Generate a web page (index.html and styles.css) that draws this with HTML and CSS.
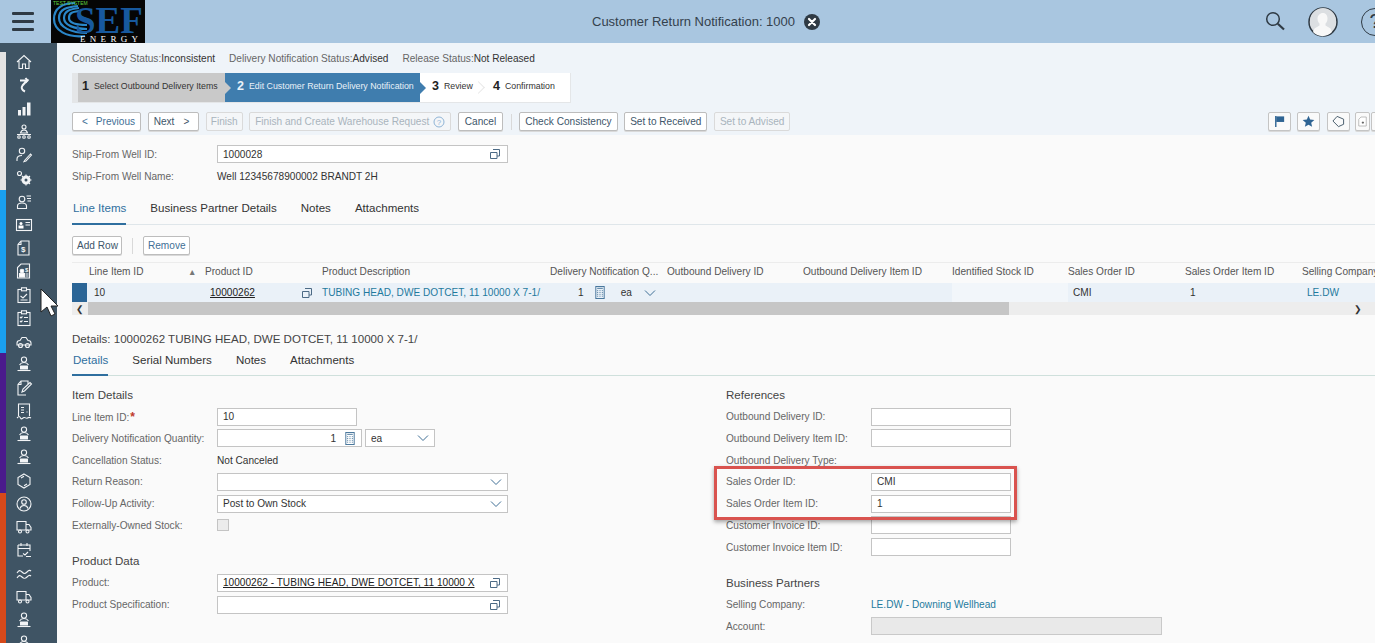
FILE: index.html
```html
<!DOCTYPE html>
<html lang="en">
<head>
<meta charset="utf-8">
<title>Customer Return Notification: 1000</title>
<link rel="stylesheet" href="styles.css">
</head>
<body>
<svg class="defs" width="0" height="0" aria-hidden="true">
  <defs>
    <symbol id="person" viewBox="0 0 16 16"><circle cx="8" cy="3.600" r="2.600"/><path d="M3.500 9c1-1.800 2.600-2.500 4.500-2.500s3.500.7 4.500 2.500"/><rect x="4" y="9.500" width="8" height="4" rx=".6" fill="#f2f4f6" stroke="none"/><path d="M1.500 14.500h13"/></symbol>
    <symbol id="truck" viewBox="0 0 16 16"><path d="M1 2.500h9v8.500H1zM10 5.500h3l2 3v2.500h-5"/><circle cx="4" cy="12.500" r="1.500"/><circle cx="11.500" cy="12.500" r="1.500"/></symbol>
    <symbol id="copy" viewBox="0 0 12 12"><path d="M4 1.500h6.500v6.500H8M1.500 4.500H8v6H1.500z"/></symbol>
    <symbol id="chev" viewBox="0 0 12 8"><path d="M1 1.500l5 5 5-5"/></symbol>
    <symbol id="calc" viewBox="0 0 10 14"><rect x=".5" y=".5" width="9" height="13" fill="none"/><path d="M2 2.500h6M2 5h1M4.500 5h1M7 5h1M2 7h1M4.500 7h1M7 7h1M2 9h1M4.500 9h1M7 9h1M2 11h1M4.500 11h1M7 11h1"/></symbol>
  </defs>
</svg>

<header class="shell">
  <button class="menu" aria-label="Menu"><span></span><span></span><span></span></button>
  <svg class="logo" viewBox="0 0 94 43" role="img" aria-label="SEF Energy">
    <rect width="94" height="43" fill="#050505"/>
    <g class="swirl">
      <path d="M34 36C15 38 3 30 3 19S12 3 24 3"/>
      <path d="M36 33C20 33 8 27 8 18S16 7 27 6"/>
      <path d="M36 29C23 29 13 25 13 18s6-9 15-10"/>
      <path d="M36 25C26 25 18 23 18 18s3-6 10-7"/>
    </g>
    <text x="24" y="33" class="logo-sef">SEF</text>
    <text x="29" y="41.500" class="logo-energy">ENERGY</text>
    <text x="2" y="5" class="logo-test">TEST SYSTEM</text>
  </svg>
  <div class="shell-title">
    <span>Customer Return Notification: 1000</span>
    <svg class="close" viewBox="0 0 16 16"><circle cx="8" cy="8" r="8" fill="#2f3a44"/><path d="M5 5l6 6M11 5l-6 6" stroke="#fff" stroke-width="2.200" stroke-linecap="round"/></svg>
  </div>
  <div class="shell-actions">
    <svg class="search" viewBox="0 0 20 20"><circle cx="8" cy="8" r="6.300" fill="none" stroke="#2f3a44" stroke-width="1.500"/><path d="M12.800 12.800L19 18.500" stroke="#2f3a44" stroke-width="2.200"/></svg>
    <svg class="avatar" viewBox="0 0 30 30"><circle cx="15" cy="15" r="14" fill="#dcdfe2" stroke="#2f3a44" stroke-width="1.500"/><circle cx="15" cy="14" r="13" fill="#dcdfe2"/><path d="M15 6c3 0 4.500 2.500 4.500 5.500 0 2.500-1 4-2 5v2l5 3 1.500 3.500a13 13 0 0 1-19 0L6.500 21.500l5-3v-2c-1-1-2-2.500-2-5C9.500 8.500 12 6 15 6z" fill="#f8f8f8"/></svg>
    <div class="help">?</div>
  </div>
</header>

<div class="layout">
  <nav class="rail">
    <div class="stripe">
      <i class="s-gray"></i><i class="s-blue"></i><i class="s-purple"></i><i class="s-orange"></i>
    </div>
    <div class="icons">
      <svg viewBox="0 0 16 16"><path d="M1 8l7-6.500L15 8M3 7v7.500h3.500V10h3v4.500H13V7"/></svg>
      <svg viewBox="0 0 16 16" class="bold"><path d="M4 3.500h7L6.500 8.500c-1.500 2-1 4.500 2.500 6"/><path d="M9.500 1l2 2.500-2 2"/></svg>
      <svg viewBox="0 0 16 16" class="fill"><path d="M2 9h3v5.500H2zM6.500 6h3v8.500h-3zM11 1.500h3.500v13H11z"/></svg>
      <svg viewBox="0 0 16 16"><circle cx="8" cy="3" r="2"/><path d="M4.500 9c.5-2 2-3 3.500-3s3 1 3.500 3zM1 10.500h14"/><circle cx="3" cy="13" r="1.300"/><circle cx="8" cy="13" r="1.300"/><circle cx="13" cy="13" r="1.300"/></svg>
      <svg viewBox="0 0 16 16"><circle cx="6" cy="4" r="2.700"/><path d="M1 14v-2c0-2 2-3.500 5-3.500M9 13l5.500-6 1 1L10 14l-2 .500z"/></svg>
      <svg viewBox="0 0 16 16"><circle cx="3.500" cy="3.500" r="2"/><circle cx="10" cy="10" r="3" stroke-width="3"/><path d="M10 4.500v1.500M10 14v1.500M4.500 10H6M14 10h1.500M6 6l1 1M13 13l1 1M14 6l-1 1"/></svg>
      <svg viewBox="0 0 16 16"><circle cx="6" cy="5" r="2.800"/><path d="M1.500 14.500v-2.500c0-2 2-3 4.500-3s4.500 1 4.500 3v2.500zM10.500 2H15M11 4.500h4M11.500 7H15"/></svg>
      <svg viewBox="0 0 16 16"><rect x=".5" y="2.500" width="15" height="11"/><circle cx="5" cy="6.500" r="1.500" fill="#fff" stroke="none"/><rect x="2.500" y="8.500" width="5" height="3" fill="#fff" stroke="none"/><path d="M9.500 5.500H14M9.500 8H14"/></svg>
      <svg viewBox="0 0 16 16"><path d="M5 1h8v14H2V4.500zM5 1v3.500H2"/><text x="5" y="12" class="rail-glyph">$</text></svg>
      <svg viewBox="0 0 16 16"><path d="M5 1h8.500v14H1.500V4.500z"/><circle cx="6" cy="8" r="1.800" fill="#fff"/><rect x="3.500" y="10.500" width="5" height="3.500" fill="#fff"/><text x="9" y="9" class="rail-glyph small">$</text><path d="M9.500 11h3M9.500 13h3"/></svg>
      <svg viewBox="0 0 16 16"><rect x="2" y="2.500" width="12" height="13"/><rect x="5.500" y=".8" width="5" height="3" fill="#3f5464"/><path d="M4.500 9l2.500 2 4-4M4.500 13h7"/></svg>
      <svg viewBox="0 0 16 16"><rect x="2" y="2.500" width="12" height="13"/><rect x="5.500" y=".8" width="5" height="3" fill="#3f5464"/><path d="M4 7l1 1 1.500-1.500M8 7.500h4M4 11l1 1 1.500-1.500M8 11.500h4"/></svg>
      <svg viewBox="0 0 16 16"><path d="M1 10c0-2 2-2.500 3-2.500L6 4.500h4l2 3c1 0 3 .5 3 2.500v2H1z"/><circle cx="4.500" cy="12.500" r="2"/><circle cx="11.500" cy="12.500" r="2"/></svg>
      <svg><use href="#person"/></svg>
      <svg viewBox="0 0 16 16"><path d="M10 15H2V4.500L5 1h7v3M5 1v3.500H2M6 12l1-3 7-6.500 1.500 1.500-7 7z"/></svg>
      <svg viewBox="0 0 16 16"><path d="M2.500 13V1h11v12M5 4.500h3M5 7h3M5 9.500h3M10.500 9h1M1 15c2-2 2.500-2 3.500 0s2 0 3.500-.5 2 1.500 3.500.5 2-1 3.500 0"/></svg>
      <svg><use href="#person"/></svg>
      <svg><use href="#person"/></svg>
      <svg viewBox="0 0 16 16"><path d="M8 1l6 3.500v7L8 15l-6-3.500v-7zM5 5l3-1.800M11 11l-3 1.800"/></svg>
      <svg viewBox="0 0 16 16"><circle cx="8" cy="8" r="7"/><circle cx="8" cy="6" r="2.300"/><path d="M4 12.500c.5-2 2-3 4-3s3.500 1 4 3"/></svg>
      <svg><use href="#truck"/></svg>
      <svg viewBox="0 0 16 16"><path d="M2 3h12v6M2 3v11h5M2 6.500h12M5 1v3M11 1v3M7 11.500l2 1.500 3-3M10 14.500h5"/></svg>
      <svg viewBox="0 0 16 16"><path d="M1 7c2-3 3-3 5-1s3 2 5 0 3-2 4-1M1 12c2-3 3-3 5-1s3 2 5 0 3-2 4-1"/></svg>
      <svg><use href="#truck"/></svg>
      <svg><use href="#person"/></svg>
      <svg><use href="#person"/></svg>
    </div>
  </nav>

  <main class="content">
    <section class="top-panel">
      <div class="status">
        <span>Consistency Status:<b>Inconsistent</b></span>
        <span>Delivery Notification Status:<b>Advised</b></span>
        <span>Release Status:<b>Not Released</b></span>
      </div>
      <ol class="wizard">
        <li class="step done"><em>1</em>Select Outbound Delivery Items</li>
        <li class="step current"><em>2</em>Edit Customer Return Delivery Notification</li>
        <li class="step todo review"><em>3</em>Review</li>
        <li class="step todo confirm"><em>4</em>Confirmation</li>
      </ol>
      <div class="toolbar">
        <button class="btn"><span class="lt">&lt;</span>Previous</button>
        <button class="btn btn-plain">Next<span class="gt">&gt;</span></button>
        <button class="btn off tight">Finish</button>
        <button class="btn off">Finish and Create Warehouse Request
          <svg class="qmark" viewBox="0 0 12 12"><circle cx="6" cy="6" r="5" fill="none" stroke="#8fb4d6"/><text x="6" y="9" class="qmark-t">?</text></svg></button>
        <button class="btn btn-plain wide">Cancel</button>
        <i class="sep"></i>
        <button class="btn btn-plain">Check Consistency</button>
        <button class="btn btn-plain">Set to Received</button>
        <button class="btn off">Set to Advised</button>
        <div class="tool-right">
          <button class="sq"><svg viewBox="0 0 14 14"><path d="M3 1v12" stroke="#2f6493" stroke-width="1.500"/><path d="M3.500 1.500H12v6H3.500z" fill="#2f6493"/></svg></button>
          <button class="sq"><svg viewBox="0 0 14 14"><path d="M7 .8l1.800 4.100 4.500.4-3.400 3 1 4.400L7 10.400l-3.900 2.300 1-4.400-3.400-3 4.500-.4z" fill="#2f6493"/></svg></button>
          <button class="sq tag"><svg viewBox="0 0 14 14"><path d="M5.500 1.500L1 6.500l6 6 5.500-2.500V4.500z" fill="none" stroke="#3f5464"/></svg></button>
          <button class="sq thin"><svg viewBox="0 0 12 14"><path d="M4 1h7v12H1V4z" fill="#fff" stroke="#aaa"/><path d="M5 8.500h3M6.500 7v3" stroke="#444"/></svg></button>
          <button class="sq thin"></button>
        </div>
      </div>
    </section>

    <section class="well">
      <div class="row"><label>Ship-From Well ID:</label><div class="field w291">1000028<svg class="ico copy"><use href="#copy"/></svg></div></div>
      <div class="row"><label>Ship-From Well Name:</label><span class="val">Well 12345678900002 BRANDT 2H</span></div>
    </section>

    <div class="tabs main-tabs">
      <span class="tab on">Line Items</span><span class="tab">Business Partner Details</span><span class="tab">Notes</span><span class="tab">Attachments</span>
    </div>

    <div class="row-actions">
      <button class="btn btn-plain act">Add Row</button><i class="sep"></i><button class="btn act">Remove</button>
    </div>

    <div class="table">
      <div class="thead">
        <span class="c1">Line Item ID</span><span class="c-sort">&#9650;</span><span class="c2">Product ID</span><span class="c3">Product Description</span><span class="c4">Delivery Notification Q...</span><span class="c5">Outbound Delivery ID</span><span class="c6">Outbound Delivery Item ID</span><span class="c7">Identified Stock ID</span><span class="c8">Sales Order ID</span><span class="c9">Sales Order Item ID</span><span class="c10">Selling Company</span>
      </div>
      <div class="trow">
        <i class="sel"></i>
        <span class="c1 pad">10</span><span class="c-sort"></span>
        <span class="c2 pid"><u>10000262</u><svg class="ico"><use href="#copy"/></svg></span>
        <span class="c3 link">TUBING HEAD, DWE DOTCET, 11 10000 X 7-1/</span>
        <span class="c4 qty">1<svg class="calc"><use href="#calc"/></svg><span class="ea">ea</span><svg class="chevron"><use href="#chev"/></svg></span>
        <span class="c5"></span><span class="c6"></span><span class="c7 stock"></span>
        <span class="c8 pad-s">CMI</span><span class="c9 pad-s">1</span><span class="c10 link pad-s">LE.DW</span>
      </div>
      <div class="scroll"><span class="arr">&#10094;</span><div class="thumb"></div><span class="arr right">&#10095;</span></div>
    </div>

    <h2 class="detail-title">Details: 10000262 TUBING HEAD, DWE DOTCET, 11 10000 X 7-1/</h2>
    <div class="tabs sub-tabs">
      <span class="tab on">Details</span><span class="tab">Serial Numbers</span><span class="tab">Notes</span><span class="tab">Attachments</span>
    </div>

    <div class="form">
      <div class="col">
        <h3>Item Details</h3>
        <div class="row"><label>Line Item ID:<b class="req">*</b></label><div class="field w140">10</div></div>
        <div class="row"><label>Delivery Notification Quantity:</label><div class="field w144 num">1<svg class="calc"><use href="#calc"/></svg></div><div class="field w70 unit">ea<svg class="ico chevron"><use href="#chev"/></svg></div></div>
        <div class="row"><label>Cancellation Status:</label><span class="val">Not Canceled</span></div>
        <div class="row"><label>Return Reason:</label><div class="field w291"><svg class="ico chevron"><use href="#chev"/></svg></div></div>
        <div class="row"><label>Follow-Up Activity:</label><div class="field w291">Post to Own Stock<svg class="ico chevron"><use href="#chev"/></svg></div></div>
        <div class="row"><label>Externally-Owned Stock:</label><i class="check"></i></div>
        <h3 class="gap">Product Data</h3>
        <div class="row"><label>Product:</label><div class="field w291"><u>10000262 - TUBING HEAD, DWE DOTCET, 11 10000 X</u><svg class="ico copy"><use href="#copy"/></svg></div></div>
        <div class="row"><label>Product Specification:</label><div class="field w291"><svg class="ico copy"><use href="#copy"/></svg></div></div>
      </div>
      <div class="col right-col">
        <h3>References</h3>
        <div class="row"><label>Outbound Delivery ID:</label><div class="field w140"></div></div>
        <div class="row"><label>Outbound Delivery Item ID:</label><div class="field w140"></div></div>
        <div class="row"><label>Outbound Delivery Type:</label></div>
        <div class="row"><label>Sales Order ID:</label><div class="field w140">CMI</div></div>
        <div class="row"><label>Sales Order Item ID:</label><div class="field w140">1</div></div>
        <div class="row"><label>Customer Invoice ID:</label><div class="field w140"></div></div>
        <div class="row"><label>Customer Invoice Item ID:</label><div class="field w140"></div></div>
        <h3 class="gap">Business Partners</h3>
        <div class="row"><label>Selling Company:</label><span class="val link">LE.DW - Downing Wellhead</span></div>
        <div class="row"><label>Account:</label><div class="field w291 disabled"></div></div>
        <div class="highlight"></div>
      </div>
    </div>
  </main>
</div>

<svg class="cursor" viewBox="0 0 18 30"><path d="M1 1v23l6-5 4 9 4-2-4-8h7z" fill="#fff" stroke="#222" stroke-width="1"/></svg>
</body>
</html>
```

FILE: styles.css
```css
* { box-sizing: border-box; }
html, body { margin: 0; height: 643px; overflow: hidden; }
body { font-family: "Liberation Sans", Arial, sans-serif; font-size: 10.100px; color: #333; background: #fafafa; position: relative; }
.defs { position: absolute; }
button { font: inherit; margin: 0; }

.shell { height: 43px; background: #a9c6e0; display: flex; position: relative; }
.menu { width: 51px; height: 43px; padding: 12px 11px 0 12px; background: none; border: 0; display: flex; flex-direction: column; gap: 5px; }
.menu span { display: block; height: 3px; width: 22px; background: #2f3a44; border-radius: 1px; }
.logo { width: 94px; height: 43px; display: block; }
.swirl path { fill: none; stroke: #2a86c8; stroke-width: 2.200; }
.logo-sef { font: 700 37px "Liberation Serif", serif; fill: #17599e; letter-spacing: 0; }
.logo-energy { font: 9px "Liberation Serif", serif; fill: #fff; letter-spacing: 4.300px; }
.logo-test { font: 5px "Liberation Sans", sans-serif; fill: #5fd23f; }
.shell-title { position: absolute; left: 592px; top: 0; height: 43px; display: flex; align-items: center; gap: 9px; font-size: 13px; color: #34414d; }
.close { width: 16px; height: 16px; }
.shell-actions { position: absolute; left: 1265px; top: 0; height: 43px; display: flex; align-items: center; width: 110px; overflow: hidden; }
.search { width: 20px; height: 20px; margin-right: 23px; flex: none; margin-top: -2px; }
.avatar { width: 30px; height: 30px; flex: none; margin-right: 23px; }
.help { width: 28px; height: 28px; flex: none; border: 1.500px solid #2f3a44; border-radius: 50%; text-align: center; font-size: 20px; line-height: 25px; color: #2f3a44; }

.layout { display: flex; height: 600px; }
.rail { width: 57px; flex: none; background: #3f5464; position: relative; overflow: hidden; display: flex; }
.stripe { width: 6px; flex: none; padding-top: 9px; height: 600px; display: flex; flex-direction: column; }
.stripe i { display: block; }
.s-gray { height: 138px; background: #e3e3e3; }
.s-blue { height: 163px; background: #1aa0ee; }
.s-purple { height: 140px; background: #4a1a8c; }
.s-orange { height: 150px; background: #d6491a; }
.icons { width: 51px; padding: 11px 0 0 10px; display: flex; flex-direction: column; gap: 7.260px; }
.icons svg { width: 16px; height: 16px; flex: none; fill: none; stroke: #f2f4f6; stroke-width: 1.100; overflow: visible; }
.icons svg.fill { fill: #f2f4f6; stroke: none; }
.icons svg.bold { stroke-width: 2; }
.rail-glyph { font: 700 8px "Liberation Sans", sans-serif; fill: #f2f4f6; stroke: none; }
.rail-glyph.small { font-size: 6px; }

.content { flex: 1; min-width: 0; background: #fafafa; overflow: hidden; }
.top-panel { height: 92px; background: #eff4f9; padding: 0 0 0 15px; }
.status { height: 30px; display: flex; gap: 14px; align-items: center; color: #666; }
.status b { font-weight: 400; color: #333; }
.wizard { list-style: none; margin: 0; padding: 0 0 0 6px; height: 30px; width: 499px; background: #e4e6e8; display: flex; }
.step { height: 29px; padding-bottom: 3px; display: flex; align-items: center; font-size: 8.800px; position: relative; white-space: nowrap; }
.step em { font-style: normal; font-weight: 700; font-size: 12.500px; margin-right: 5px; color: #222; }
.done { width: 147px; background: #c9c9c9; padding-left: 4px; }
.done::after { content: ""; position: absolute; right: -6px; top: 9px; border-left: 6px solid #c9c9c9; border-top: 6px solid transparent; border-bottom: 6px solid transparent; z-index: 1; }
.current { width: 195px; background: #3f7dae; color: #e9f1f8; padding-left: 12px; }
.current em { color: #e9f1f8; }
.current::after { content: ""; position: absolute; right: -6px; top: 9px; border-left: 6px solid #3f7dae; border-top: 6px solid transparent; border-bottom: 6px solid transparent; z-index: 1; }
.todo { background: #fff; padding-left: 12px; }
.review { width: 60px; }
.confirm { width: 90px; padding-left: 13px; }
.review::after { content: ""; position: absolute; right: -3px; top: 10px; width: 8px; height: 8px; border-top: 1px solid #e8e8e8; border-right: 1px solid #e8e8e8; transform: rotate(45deg); z-index: 1; }

.toolbar { height: 19px; margin-top: 9px; display: flex; align-items: stretch; gap: 6.500px; }
.btn { height: 19px; padding: 0 5px; background: #fff; border: 1px solid #bdbdbd; border-radius: 2px; color: #3f6f96; white-space: nowrap; display: inline-flex; align-items: center; box-shadow: 0 1px 0 #d9d9d9; }
.btn-plain { color: #40566a; }
.off { color: #a9b4bd; border-color: #dadada; background: #f4f6f8; box-shadow: none; }
.tight { padding: 0 4px; }
.wide { padding: 0 6px; }
.lt { margin: 0 8px 0 4px; font-size: 10px; }
.gt { margin: 0 4px 0 9px; font-size: 10px; }
.qmark { width: 12px; height: 12px; margin-left: 4px; }
.qmark-t { font-size: 8px; text-anchor: middle; fill: #8fb4d6; }
.sep { width: 1px; height: 16px; align-self: center; background: #d9d9d9; margin: 0 1px; flex: none; }
.tool-right { margin-left: auto; margin-right: -6px; display: flex; gap: 6px; }
.sq { width: 23px; height: 19px; padding: 2px; background: #fafafa; border: 1px solid #c4c4c4; border-radius: 2px; display: flex; align-items: center; justify-content: center; box-shadow: 0 1px 0 #d9d9d9; }
.sq svg { width: 13px; height: 13px; }
.sq.tag { margin-left: 1px; }
.sq.thin { width: 15px; margin-left: -1px; }
.sq.thin + .sq.thin { width: 10px; margin-left: -5px; }

.row { height: 21.750px; display: flex; align-items: center; color: #666; }
.row label { width: 145px; flex: none; white-space: nowrap; }
.val { color: #333; }
.link { color: #1f7a9e; }
.req { color: #c0392b; font-size: 12px; font-weight: 700; margin-left: 1px; }
.field { height: 18px; background: #fff; border: 1px solid #c4c4c4; padding: 0 5px; display: flex; align-items: center; color: #333; position: relative; white-space: nowrap; }
.field u { color: #222; }
.w140 { width: 140px; }
.w144 { width: 145px; }
.w70 { width: 70px; margin-left: 3px; }
.w291 { width: 291px; }
.num { justify-content: flex-end; padding-right: 0; }
.disabled { background: #e9e9e9; border-color: #c9c9c9; }
.ico { width: 12px; height: 12px; fill: none; stroke: #4c6a85; stroke-width: 1; flex: none; margin-left: auto; }
.chevron { width: 12px; height: 8px; fill: none; stroke: #3f6f96; stroke-width: 1; flex: none; }
.field .chevron { margin-left: auto; }
.field .copy { margin-right: 1px; }
.calc { width: 10px; height: 13px; fill: none; stroke: #3f6f96; stroke-width: 1; flex: none; margin: 0 6px 0 9px; }
.check { width: 12px; height: 12px; border: 1px solid #c4c4c4; background: #ececec; display: block; }

.well { padding: 8.500px 0 0 15px; height: 61px; }

.tabs { display: flex; align-items: stretch; margin-left: 15px; border-bottom: 1px solid #dfe6ea; }
.tab { color: #333; position: relative; white-space: nowrap; padding-left: 1px; }
.tab.on { color: #2f6f9f; }
.tab.on::after { content: ""; position: absolute; left: 0; right: 0; bottom: -1px; height: 2px; background: #2f6f9f; }
.main-tabs { height: 29px; gap: 23px; font-size: 11.550px; padding-top: 6px; }
.sub-tabs { margin-top: 2px; height: 27px; gap: 23px; font-size: 11.550px; padding-top: 5px; border-bottom-color: #cfe0dc; }

.row-actions { margin: 11px 0 0 15px; display: flex; gap: 9px; height: 19px; align-items: center; }
.act { padding: 0 3px 0 4px; }

.table { margin: 7px 0 0 15px; }
.thead, .trow { display: flex; align-items: center; white-space: nowrap; overflow: hidden; position: relative; }
.thead { height: 21px; padding-bottom: 3px; color: #555; border-top: 1px solid #ececec; }
.trow { height: 19px; background: #eaf1f8; color: #333; }
.thead > span, .trow > span { flex: none; }
.c1 { width: 116px; padding-left: 17px; }
.c-sort { width: 17px; font-size: 8.500px; color: #777; }
.c2 { width: 117px; }
.c3 { width: 228px; }
.c4 { width: 117px; }
.c5 { width: 136px; }
.c6 { width: 149px; }
.c7 { width: 116px; }
.c8 { width: 117px; }
.c9 { width: 117px; }
.c10 { width: 90px; }
.sel { position: absolute; left: 0; top: 0; width: 15px; height: 19px; background: #2b6596; }
.trow .c1 { padding-left: 22px; }
.pad-s { padding-left: 5px; }
.pid { display: flex; align-items: center; padding: 0 9px 0 5px; }
.pid u { color: #222; }
.qty { display: flex; align-items: center; padding-left: 28px; }
.qty .calc { margin: 0 16px 0 11px; }
.ea { margin-right: 12px; }
.stock { height: 19px; background: #f2f6fa; }
.scroll { height: 13px; display: flex; align-items: center; background: #ededed; position: relative; }
.arr { width: 16px; flex: none; font-size: 9px; color: #333; text-align: center; }
.arr.right { position: absolute; left: 1278px; }
.thumb { width: 921px; height: 13px; background: #c6c6c6; }

.detail-title { margin: 17px 0 0 15px; height: 15px; line-height: 15px; font-size: 11.550px; font-weight: 400; color: #444; }

.form { display: flex; padding: 8px 0 0 15px; }
.col { width: 654px; flex: none; position: relative; }
.col h3 { margin: 0; height: 21.750px; padding-top: 1px; line-height: 21.750px; font-size: 11.550px; font-weight: 400; color: #444; }
.col h3.gap { margin-top: 14px; }
.highlight { position: absolute; left: -12px; top: 82px; width: 303px; height: 54px; border: 3px solid #d9534f; box-shadow: 0 2px 4px rgba(0,0,0,.35); }

.cursor { position: absolute; left: 40px; top: 288px; width: 18px; height: 30px; }
```
